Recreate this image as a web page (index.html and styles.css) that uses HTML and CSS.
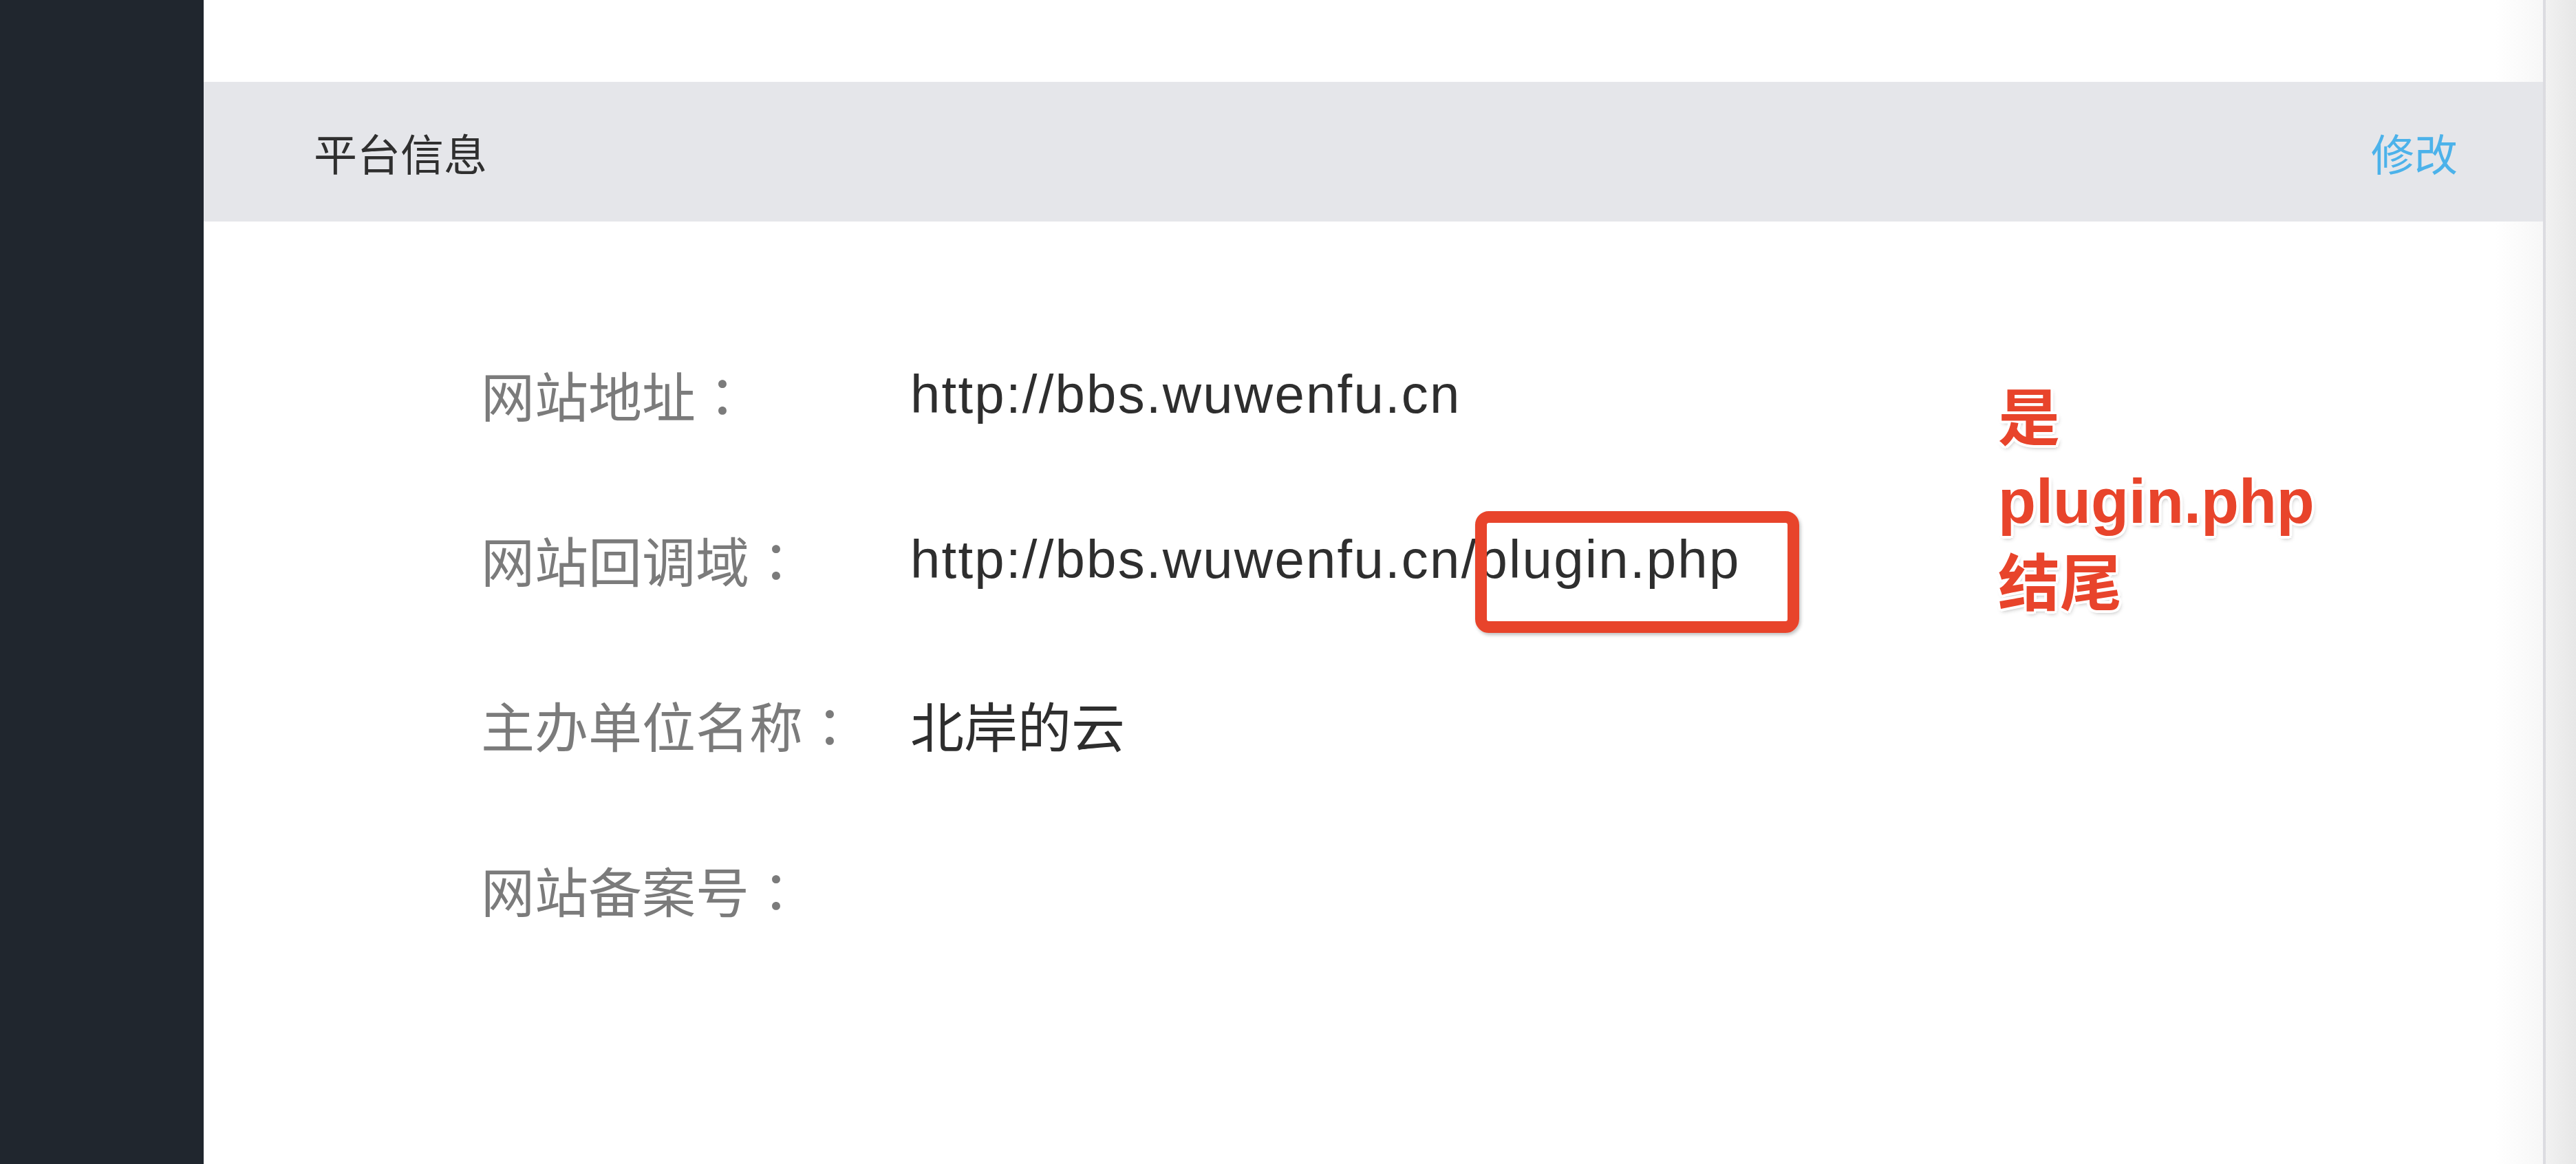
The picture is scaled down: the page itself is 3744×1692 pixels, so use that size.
FILE: index.html
```html
<!DOCTYPE html>
<html lang="zh-CN">
<head>
<meta charset="utf-8">
<title>平台信息</title>
<link rel="stylesheet" href="styles.css">
</head>
<body>
<div class="app">
  <aside class="sidebar"></aside>
  <main class="panel">
    <div class="panel-head">
      <span class="panel-title">平台信息</span>
      <a class="panel-edit">修改</a>
    </div>
    <div class="info">
      <div class="row"><span class="label">网站地址<span class="colon" lang="zh-TW">：</span></span><span class="value url">http://bbs.wuwenfu.cn</span></div>
      <div class="row"><span class="label">网站回调域<span class="colon" lang="zh-TW">：</span></span><span class="value url">http://bbs.wuwenfu.cn/plugin.php</span></div>
      <div class="row"><span class="label">主办单位名称<span class="colon" lang="zh-TW">：</span></span><span class="value">北岸的云</span></div>
      <div class="row"><span class="label">网站备案号<span class="colon" lang="zh-TW">：</span></span><span class="value"></span></div>
    </div>
    <div class="mark-box"></div>
    <div class="mark-note">是<br>plugin.php<br>结尾</div>
  </main>
  <div class="scroll-track"></div>
</div>
</body>
</html>
```

FILE: styles.css
```css
* { box-sizing: border-box; }
html, body {
  margin: 0;
  padding: 0;
  height: 100%;
  background: #ffffff;
  font-family: "Liberation Sans", "Noto Sans CJK SC", sans-serif;
}
.app {
  display: flex;
  height: 1692px;
  overflow: hidden;
}
.sidebar {
  width: 296px;
  flex: 0 0 296px;
  background: #20262e;
}
.panel {
  position: relative;
  flex: 1 1 auto;
  padding-top: 119px;
  background: linear-gradient(to right, #ffffff calc(100% - 70px), #f7f7f7 100%);
}
.panel-head {
  height: 203px;
  display: flex;
  align-items: center;
  justify-content: space-between;
  padding: 0 124px 0 160px;
  background: #e5e6ea;
}
.panel-title {
  font-family: "Noto Sans CJK SC", sans-serif;
  font-size: 63px;
  color: #2f2f2f;
}
.panel-edit {
  font-family: "Noto Sans CJK SC", sans-serif;
  font-size: 63px;
  color: #4cb2ea;
}
.info {
  padding: 131px 0 0 403px;
}
.row {
  display: flex;
  align-items: center;
  height: 240px;
}
.label {
  width: 624px;
  flex: 0 0 624px;
  font-family: "Noto Sans CJK SC", sans-serif;
  font-size: 78px;
  color: #7b7b7b;
}
.colon {
  font-family: "Noto Sans CJK TC", "Noto Sans CJK SC", sans-serif;
}
.value {
  font-family: "Liberation Sans", "Noto Sans CJK SC", sans-serif;
  font-size: 78px;
  color: #2e2e2e;
}
.url {
  letter-spacing: 2.2px;
}
.mark-box {
  position: absolute;
  left: 1848px;
  top: 743px;
  width: 471px;
  height: 177px;
  border: 17px solid #e8442b;
  border-radius: 20px;
  box-shadow: 2px 3px 5px rgba(0, 0, 0, 0.25);
}
.mark-note {
  position: absolute;
  left: 2608px;
  top: 549px;
  font-family: "Liberation Sans", "Noto Sans CJK SC", sans-serif;
  font-weight: bold;
  font-size: 90px;
  line-height: 120px;
  color: #e8442b;
  text-shadow:
    -4px 0 0 #fff, 4px 0 0 #fff, 0 -4px 0 #fff, 0 4px 0 #fff,
    -3px -3px 0 #fff, 3px -3px 0 #fff, -3px 3px 0 #fff, 3px 3px 0 #fff,
    2px 4px 6px rgba(0, 0, 0, 0.3);
}
.scroll-track {
  width: 48px;
  flex: 0 0 48px;
  border-left: 4px solid #dcdce1;
  background: linear-gradient(to right, #f1f1f1, #e7e7e7);
}
```
